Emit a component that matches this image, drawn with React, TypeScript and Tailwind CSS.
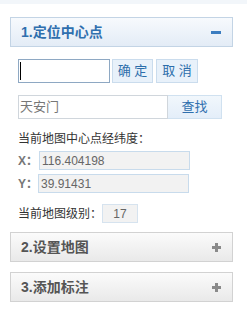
const cjk = { fontFamily: '"Liberation Sans", "Noto Sans CJK SC", sans-serif' };

function SectionHeader({ title, open }: { title: string; open?: boolean }) {
  return (
    <div
      className={
        open
          ? 'flex h-[30px] items-center justify-between border border-[#c3d4e5] bg-gradient-to-b from-[#f7fafd] to-[#e3ecf6] pl-[10px] pr-[11px]'
          : 'flex h-[30px] items-center justify-between border border-[#d2d2d2] bg-gradient-to-b from-[#fbfbfb] to-[#e9e9e9] pl-[10px] pr-[11px]'
      }
    >
      <span
        className={open ? 'text-[14px] font-bold text-[#2f6fae]' : 'text-[14px] font-bold text-[#555]'}
        style={cjk}
      >
        {title}
      </span>
      {open ? (
        <span className="h-[3px] w-[10px] bg-[#3b7dc0]" />
      ) : (
        <svg width="9" height="9" viewBox="0 0 9 9">
          <rect x="3" y="0" width="3" height="9" fill="#8a8a8a" />
          <rect x="0" y="3" width="9" height="3" fill="#8a8a8a" />
        </svg>
      )}
    </div>
  );
}

export default function App() {
  return (
    <div className="h-[310px] w-[247px] overflow-hidden bg-white" style={cjk}>
      <div className="h-[4px] bg-[#f2f6fa]" />
      <div className="ml-[10px] w-[223px] pt-[13px]">
        <SectionHeader title="1.定位中心点" open />

        <div className="pl-[8px]">
          <div className="mt-[12px] flex items-center">
            <div className="flex h-[24px] w-[92px] items-center border border-[#8ea8c3] bg-white pl-[1px]">
              <span className="h-[18px] w-[1px] bg-black" />
            </div>
            <button className="ml-[2px] h-[24px] w-[41px] border border-[#cadced] bg-[#e8f1fa] text-[13px] text-[#2c6eab]">
              确 定
            </button>
            <button className="ml-[3px] h-[24px] w-[42px] border border-[#cadced] bg-[#e8f1fa] text-[13px] text-[#2c6eab]">
              取 消
            </button>
          </div>

          <div className="mt-[12px] flex items-center">
            <div className="flex h-[24px] w-[150px] items-center border border-[#d0d6dc] bg-white pl-[1px] text-[13px] text-[#777]">
              天安门
            </div>
            <button className="h-[24px] w-[54px] border border-l-0 border-[#d0e1f0] bg-gradient-to-b from-[#f1f7fc] to-[#e4eef9] text-[13px] text-[#2f6fae]">
              查找
            </button>
          </div>

          <div className="mt-[12px] text-[12px] leading-[16px] text-[#333]">当前地图中心点经纬度：</div>

          <div className="mt-[4px] flex items-center">
            <span className="w-[21px] text-[12px] font-bold text-[#777]">X：</span>
            <div className="flex h-[19px] w-[151px] items-center border border-[#c8dbec] bg-[#f2f2f2] pl-[2px] text-[12px] text-[#666]">
              116.404198
            </div>
          </div>
          <div className="mt-[4px] flex items-center">
            <span className="w-[20px] text-[12px] font-bold text-[#777]">Y：</span>
            <div className="flex h-[19px] w-[151px] items-center border border-[#c8dbec] bg-[#f2f2f2] pl-[2px] text-[12px] text-[#666]">
              39.91431
            </div>
          </div>

          <div className="mt-[11px] flex items-center">
            <span className="w-[84px] text-[12px] text-[#333]">当前地图级别：</span>
            <div className="flex h-[19px] w-[36px] items-center justify-center border border-[#d6e3ef] bg-[#f2f2f2] text-[12px] text-[#666]">
              17
            </div>
          </div>
        </div>

        <div className="mt-[9px]">
          <SectionHeader title="2.设置地图" />
        </div>
        <div className="mt-[10px]">
          <SectionHeader title="3.添加标注" />
        </div>
      </div>
    </div>
  );
}
